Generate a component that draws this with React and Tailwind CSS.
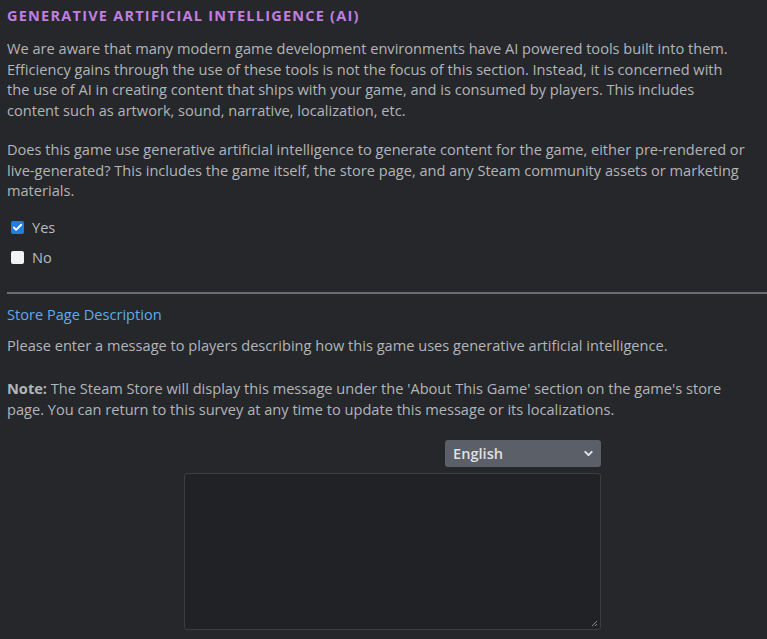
import { ChevronDown, Check } from 'lucide-react';

const font = { fontFamily: '"Open Sans", "Noto Sans", Arial, sans-serif' };

function Box({ checked, label }) {
  return (
    <label className="flex items-center gap-[8px] h-[30px]">
      <span
        className={`grid h-[13px] w-[13px] place-items-center rounded-[2px] ${
          checked ? 'bg-[#1f7fe0]' : 'bg-[#f2f2f2]'
        }`}
      >
        {checked && <Check size={11} strokeWidth={4} className="text-white" />}
      </span>
      <span className="text-[14.6px] text-[#b9bbbe]">{label}</span>
    </label>
  );
}

export default function App() {
  return (
    <div className="min-h-[639px] w-[767px] overflow-hidden bg-[#25272b]" style={font}>
      <div className="pl-[7px] pt-[7px]">
        <h1 className="text-[14.5px] font-bold uppercase tracking-[0.085em] text-[#c17ee0] leading-[18px]">
          Generative Artificial Intelligence (AI)
        </h1>

        <p className="mt-[13px] whitespace-nowrap text-[14.6px] leading-[20.5px] text-[#b3b5b8]">
          We are aware that many modern game development environments have AI powered tools built into them.
          <br />
          Efficiency gains through the use of these tools is not the focus of this section. Instead, it is concerned with
          <br />
          the use of AI in creating content that ships with your game, and is consumed by players. This includes
          <br />
          content such as artwork, sound, narrative, localization, etc.
        </p>

        <p className="mt-[19px] whitespace-nowrap text-[14.6px] leading-[20.5px] text-[#b3b5b8]">
          Does this game use generative artificial intelligence to generate content for the game, either pre-rendered or
          <br />
          live-generated? This includes the game itself, the store page, and any Steam community assets or marketing
          <br />
          materials.
        </p>

        <div className="mt-[12px] pl-[4px]">
          <Box checked label="Yes" />
          <Box label="No" />
        </div>

        <div className="mt-[19px] h-[2px] bg-[#6a6d72]" />

        <h2 className="mt-[10px] text-[14.6px] leading-[20px] text-[#5aaee9]">Store Page Description</h2>

        <p className="mt-[11px] whitespace-nowrap text-[14.6px] leading-[20.5px] text-[#b3b5b8]">
          Please enter a message to players describing how this game uses generative artificial intelligence.
        </p>

        <p className="mt-[23px] whitespace-nowrap text-[14.6px] leading-[20.5px] text-[#b3b5b8]">
          <b className="font-bold">Note:</b>&nbsp;The Steam Store will display this message under the 'About This Game'
          section on the game's store
          <br />
          page. You can return to this survey at any time to update this message or its localizations.
        </p>

        <div className="mt-[21px] ml-[177px] flex w-[417px] flex-col items-end gap-[6px]">
          <div className="flex h-[27px] w-[156px] items-center justify-between rounded-[3px] bg-[#5b5f67] pl-[8px] pr-[6px]">
            <span className="text-[14.6px] font-semibold text-[#dfe1e3]">English</span>
            <ChevronDown size={13} strokeWidth={3.5} className="text-[#e6e6e6]" />
          </div>
          <div className="relative h-[157px] w-[417px] rounded-[3px] border border-[#3a3d42] bg-[#212226]">
            <svg className="absolute bottom-[2px] right-[2px]" width="7" height="7" viewBox="0 0 7 7">
              <path d="M1 6 L6 1 M4 6 L6 4" stroke="#8a8d91" strokeWidth="1" />
            </svg>
          </div>
        </div>
      </div>
    </div>
  );
}
